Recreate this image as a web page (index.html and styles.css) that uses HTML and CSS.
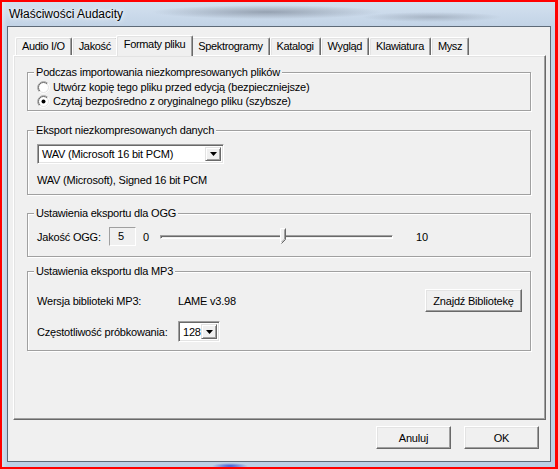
FILE: index.html
```html
<!DOCTYPE html>
<html lang="pl">
<head>
<meta charset="utf-8">
<title>Właściwości Audacity</title>
<link rel="stylesheet" href="styles.css">
</head>
<body>
<div class="window">
  <div class="titlebar"><span class="title">Właściwości Audacity</span></div>
  <div class="client">
    <div class="tabs">
      <div class="tab">Audio I/O</div>
      <div class="tab">Jakość</div>
      <div class="tab active">Formaty pliku</div>
      <div class="tab">Spektrogramy</div>
      <div class="tab">Katalogi</div>
      <div class="tab">Wygląd</div>
      <div class="tab">Klawiatura</div>
      <div class="tab">Mysz</div>
    </div>
    <div class="panel">
      <fieldset class="group g-import">
        <legend>Podczas importowania niezkompresowanych plików</legend>
        <div class="radio">
          <svg class="radio-mark" width="13" height="13" viewBox="0 0 13 13"><circle cx="6.5" cy="6.5" r="5.5" fill="#fff"/><path d="M2.26 10.74A6 6 0 0 1 10.74 2.26" fill="none" stroke="#a0a0a0"/><path d="M2.26 10.74A6 6 0 0 0 10.74 2.26" fill="none" stroke="#fff"/><path d="M2.96 10.04A5 5 0 0 1 10.04 2.96" fill="none" stroke="#696969"/><path d="M2.96 10.04A5 5 0 0 0 10.04 2.96" fill="none" stroke="#e3e3e3"/></svg>
          <span>Utwórz kopię tego pliku przed edycją (bezpieczniejsze)</span>
        </div>
        <div class="radio">
          <svg class="radio-mark" width="13" height="13" viewBox="0 0 13 13"><circle cx="6.5" cy="6.5" r="5.5" fill="#fff"/><path d="M2.26 10.74A6 6 0 0 1 10.74 2.26" fill="none" stroke="#a0a0a0"/><path d="M2.26 10.74A6 6 0 0 0 10.74 2.26" fill="none" stroke="#fff"/><path d="M2.96 10.04A5 5 0 0 1 10.04 2.96" fill="none" stroke="#696969"/><path d="M2.96 10.04A5 5 0 0 0 10.04 2.96" fill="none" stroke="#e3e3e3"/><circle cx="6.5" cy="6.5" r="2" fill="#000"/></svg>
          <span>Czytaj bezpośredno z oryginalnego pliku (szybsze)</span>
        </div>
      </fieldset>

      <fieldset class="group g-export">
        <legend>Eksport niezkompresowanych danych</legend>
        <div class="combo combo-format">
          <span class="combo-text">WAV (Microsoft 16 bit PCM)</span>
          <span class="combo-btn"><svg width="7" height="4" viewBox="0 0 7 4"><path d="M0 0h7L3.5 4z" fill="#000"/></svg></span>
        </div>
        <div class="desc">WAV (Microsoft), Signed 16 bit PCM</div>
      </fieldset>

      <fieldset class="group g-ogg">
        <legend>Ustawienia eksportu dla OGG</legend>
        <div class="ogg-row">
          <span class="ogg-label">Jakość OGG:</span>
          <span class="value-box">5</span>
          <span class="tick-min">0</span>
          <div class="slider">
            <div class="track"></div>
            <svg class="thumb" width="6" height="16" viewBox="0 0 6 16"><path d="M0.5 0.5H5.5V11.5L1.5 15.5H0.5Z" fill="#f0f0f0"/><path d="M0.5 15V0.5H5" fill="none" stroke="#fff"/><path d="M5.5 0.5V11.5L1.5 15.5" fill="none" stroke="#696969"/><path d="M4.5 1.5V11.1L1.6 14" fill="none" stroke="#a0a0a0"/></svg>
          </div>
          <span class="tick-max">10</span>
        </div>
      </fieldset>

      <fieldset class="group g-mp3">
        <legend>Ustawienia eksportu dla MP3</legend>
        <div class="mp3-grid">
          <span class="mp3-label">Wersja biblioteki MP3:</span>
          <span class="mp3-version">LAME v3.98</span>
          <button class="btn btn-find" type="button">Znajdź Bibliotekę</button>
          <span class="mp3-label">Częstotliwość próbkowania:</span>
          <div class="combo combo-rate">
            <span class="combo-text">128</span>
            <span class="combo-btn"><svg width="7" height="4" viewBox="0 0 7 4"><path d="M0 0h7L3.5 4z" fill="#000"/></svg></span>
          </div>
        </div>
      </fieldset>
    </div>
    <div class="actions">
      <button class="btn" type="button">Anuluj</button>
      <button class="btn" type="button">OK</button>
    </div>
  </div>
</div>
</body>
</html>
```

FILE: styles.css
```css
* { box-sizing: border-box; }

html, body {
  margin: 0;
  width: 558px;
  height: 469px;
  overflow: hidden;
}

body {
  background: #ff0000;
  padding: 2px 3px 2px 2px;
  font-family: "Liberation Sans", Arial, sans-serif;
  font-size: 11px;
  letter-spacing: -0.2px;
  color: #000;
}

.window {
  width: 553px;
  height: 465px;
  display: flex;
  flex-direction: column;
  padding: 0 4px 5px 5px;
  background:
    radial-gradient(ellipse 115px 7px at 265px 10px, rgba(105, 115, 130, 0.55), rgba(105, 115, 130, 0) 100%),
    radial-gradient(ellipse 70px 5px at 430px 15px, rgba(115, 125, 140, 0.4), rgba(115, 125, 140, 0) 100%),
    radial-gradient(ellipse 18px 3px at 228px 464px, rgba(40, 70, 210, 0.85), rgba(40, 70, 210, 0) 100%),
    linear-gradient(90deg, rgba(255, 255, 255, 0.35) 0, rgba(255, 255, 255, 0) 5px),
    linear-gradient(#d4e1ef 0, #c2d3e6 24px, #bdd0e5 100%);
}

.titlebar {
  height: 24px;
  flex: none;
  padding-left: 2px;
  line-height: 24px;
}

.title {
  font-size: 12px;
  letter-spacing: 0;
  color: #000;
  text-shadow: 0 0 6px #fff, 0 0 3px #fff;
}

.client {
  flex: 1;
  display: flex;
  flex-direction: column;
  border: 1px solid #5e6a78;
  background: #f0f0f0;
  padding: 8px 4px 0 5px;
}

/* Tabs */
.tabs {
  display: flex;
  align-items: flex-end;
  height: 20px;
  padding-left: 2px;
  letter-spacing: -0.35px;
}

.tab {
  height: 18px;
  padding: 0 6px;
  line-height: 17px;
  border: 1px solid;
  border-color: #fff #696969 transparent #fff;
  border-bottom: 0;
  border-radius: 2px 2px 0 0;
  box-shadow: inset -1px 0 0 #a0a0a0, inset 1px 1px 0 #e3e3e3;
  background: #f0f0f0;
  white-space: nowrap;
}

.tab.active {
  position: relative;
  z-index: 1;
  height: 21px;
  margin: 0 -2px -1px;
  padding: 0 7px;
  line-height: 16px;
}

/* Panel */
.panel {
  height: 365px;
  flex: none;
  border: 1px solid;
  border-color: #fff #696969 #696969 #fff;
  box-shadow: inset -1px -1px 0 #a0a0a0, inset 1px 1px 0 #e3e3e3;
  padding: 10px 14px 0 13px;
}

/* Group boxes */
.group {
  margin: 0;
  min-width: 0;
  border: 1px solid #a0a0a0;
  box-shadow: 1px 1px 0 #fff, inset 1px 1px 0 #fff;
  padding: 0 8px 0 9px;
}

.group legend {
  margin-left: -3px;
  padding: 0 2px;
  line-height: 13px;
  background: #f0f0f0;
}

.g-import { padding-top: 1px; padding-bottom: 2px; }
.g-export { margin-top: 13px; padding-top: 7px; padding-bottom: 7px; }
.g-ogg { margin-top: 12px; padding-top: 7px; padding-bottom: 10px; }
.g-mp3 { margin-top: 8px; padding-top: 11px; padding-bottom: 8px; }

.radio {
  display: flex;
  align-items: center;
  height: 14px;
  gap: 3px;
}

.radio-mark { flex: none; }

/* Combo */
.combo {
  display: flex;
  align-items: center;
  height: 20px;
  background: #fff;
  border: 1px solid;
  border-color: #a0a0a0 #fff #fff #a0a0a0;
  box-shadow: inset 1px 1px 0 #696969, inset -1px -1px 0 #e3e3e3;
  padding: 2px;
}

.combo-format { width: 187px; }
.combo-rate { width: 42px; height: 21px; }

.combo-text {
  flex: 1;
  padding-left: 2px;
  white-space: nowrap;
  line-height: 14px;
}

.combo-btn {
  flex: none;
  width: 16px;
  height: 100%;
  display: flex;
  align-items: center;
  justify-content: center;
  background: #f0f0f0;
  border: 1px solid;
  border-color: #e3e3e3 #696969 #696969 #e3e3e3;
  box-shadow: inset 1px 1px 0 #fff, inset -1px -1px 0 #a0a0a0;
}

.desc {
  margin-top: 10px;
  line-height: 13px;
}

/* OGG row */
.ogg-row {
  display: flex;
  align-items: center;
  height: 19px;
}

.ogg-label { width: 72px; flex: none; }

.value-box {
  width: 27px;
  height: 19px;
  flex: none;
  border: 1px solid;
  border-color: #a0a0a0 #fff #fff #a0a0a0;
  text-align: center;
  line-height: 17px;
  padding-right: 3px;
}

.tick-min { margin-left: 7px; width: 6px; flex: none; }

.slider {
  position: relative;
  width: 233px;
  height: 19px;
  margin-left: 11px;
  flex: none;
  display: flex;
  align-items: center;
}

.track {
  width: 100%;
  height: 4px;
  border-top: 1px solid #a0a0a0;
  border-left: 1px solid #a0a0a0;
  border-bottom: 1px solid #fff;
  border-right: 1px solid #fff;
  box-shadow: inset 1px 1px 0 #696969;
}

.thumb {
  position: absolute;
  left: 120px;
  top: 1px;
}

.tick-max { margin-left: 23px; }

/* MP3 grid */
.mp3-grid {
  display: grid;
  grid-template-columns: 141px 1fr auto;
  grid-template-rows: 23px 21px;
  row-gap: 9px;
  align-items: center;
}

.btn {
  font: inherit;
  letter-spacing: inherit;
  color: #000;
  width: 75px;
  height: 23px;
  padding: 0;
  background: #f0f0f0;
  border: 1px solid;
  border-color: #fff #696969 #696969 #fff;
  box-shadow: inset -1px -1px 0 #a0a0a0, inset 1px 1px 0 #e3e3e3;
}

.btn-find { width: 97px; }

/* Bottom buttons */
.actions {
  display: flex;
  justify-content: flex-end;
  gap: 13px;
  padding: 6px 7px 0 0;
}
```
